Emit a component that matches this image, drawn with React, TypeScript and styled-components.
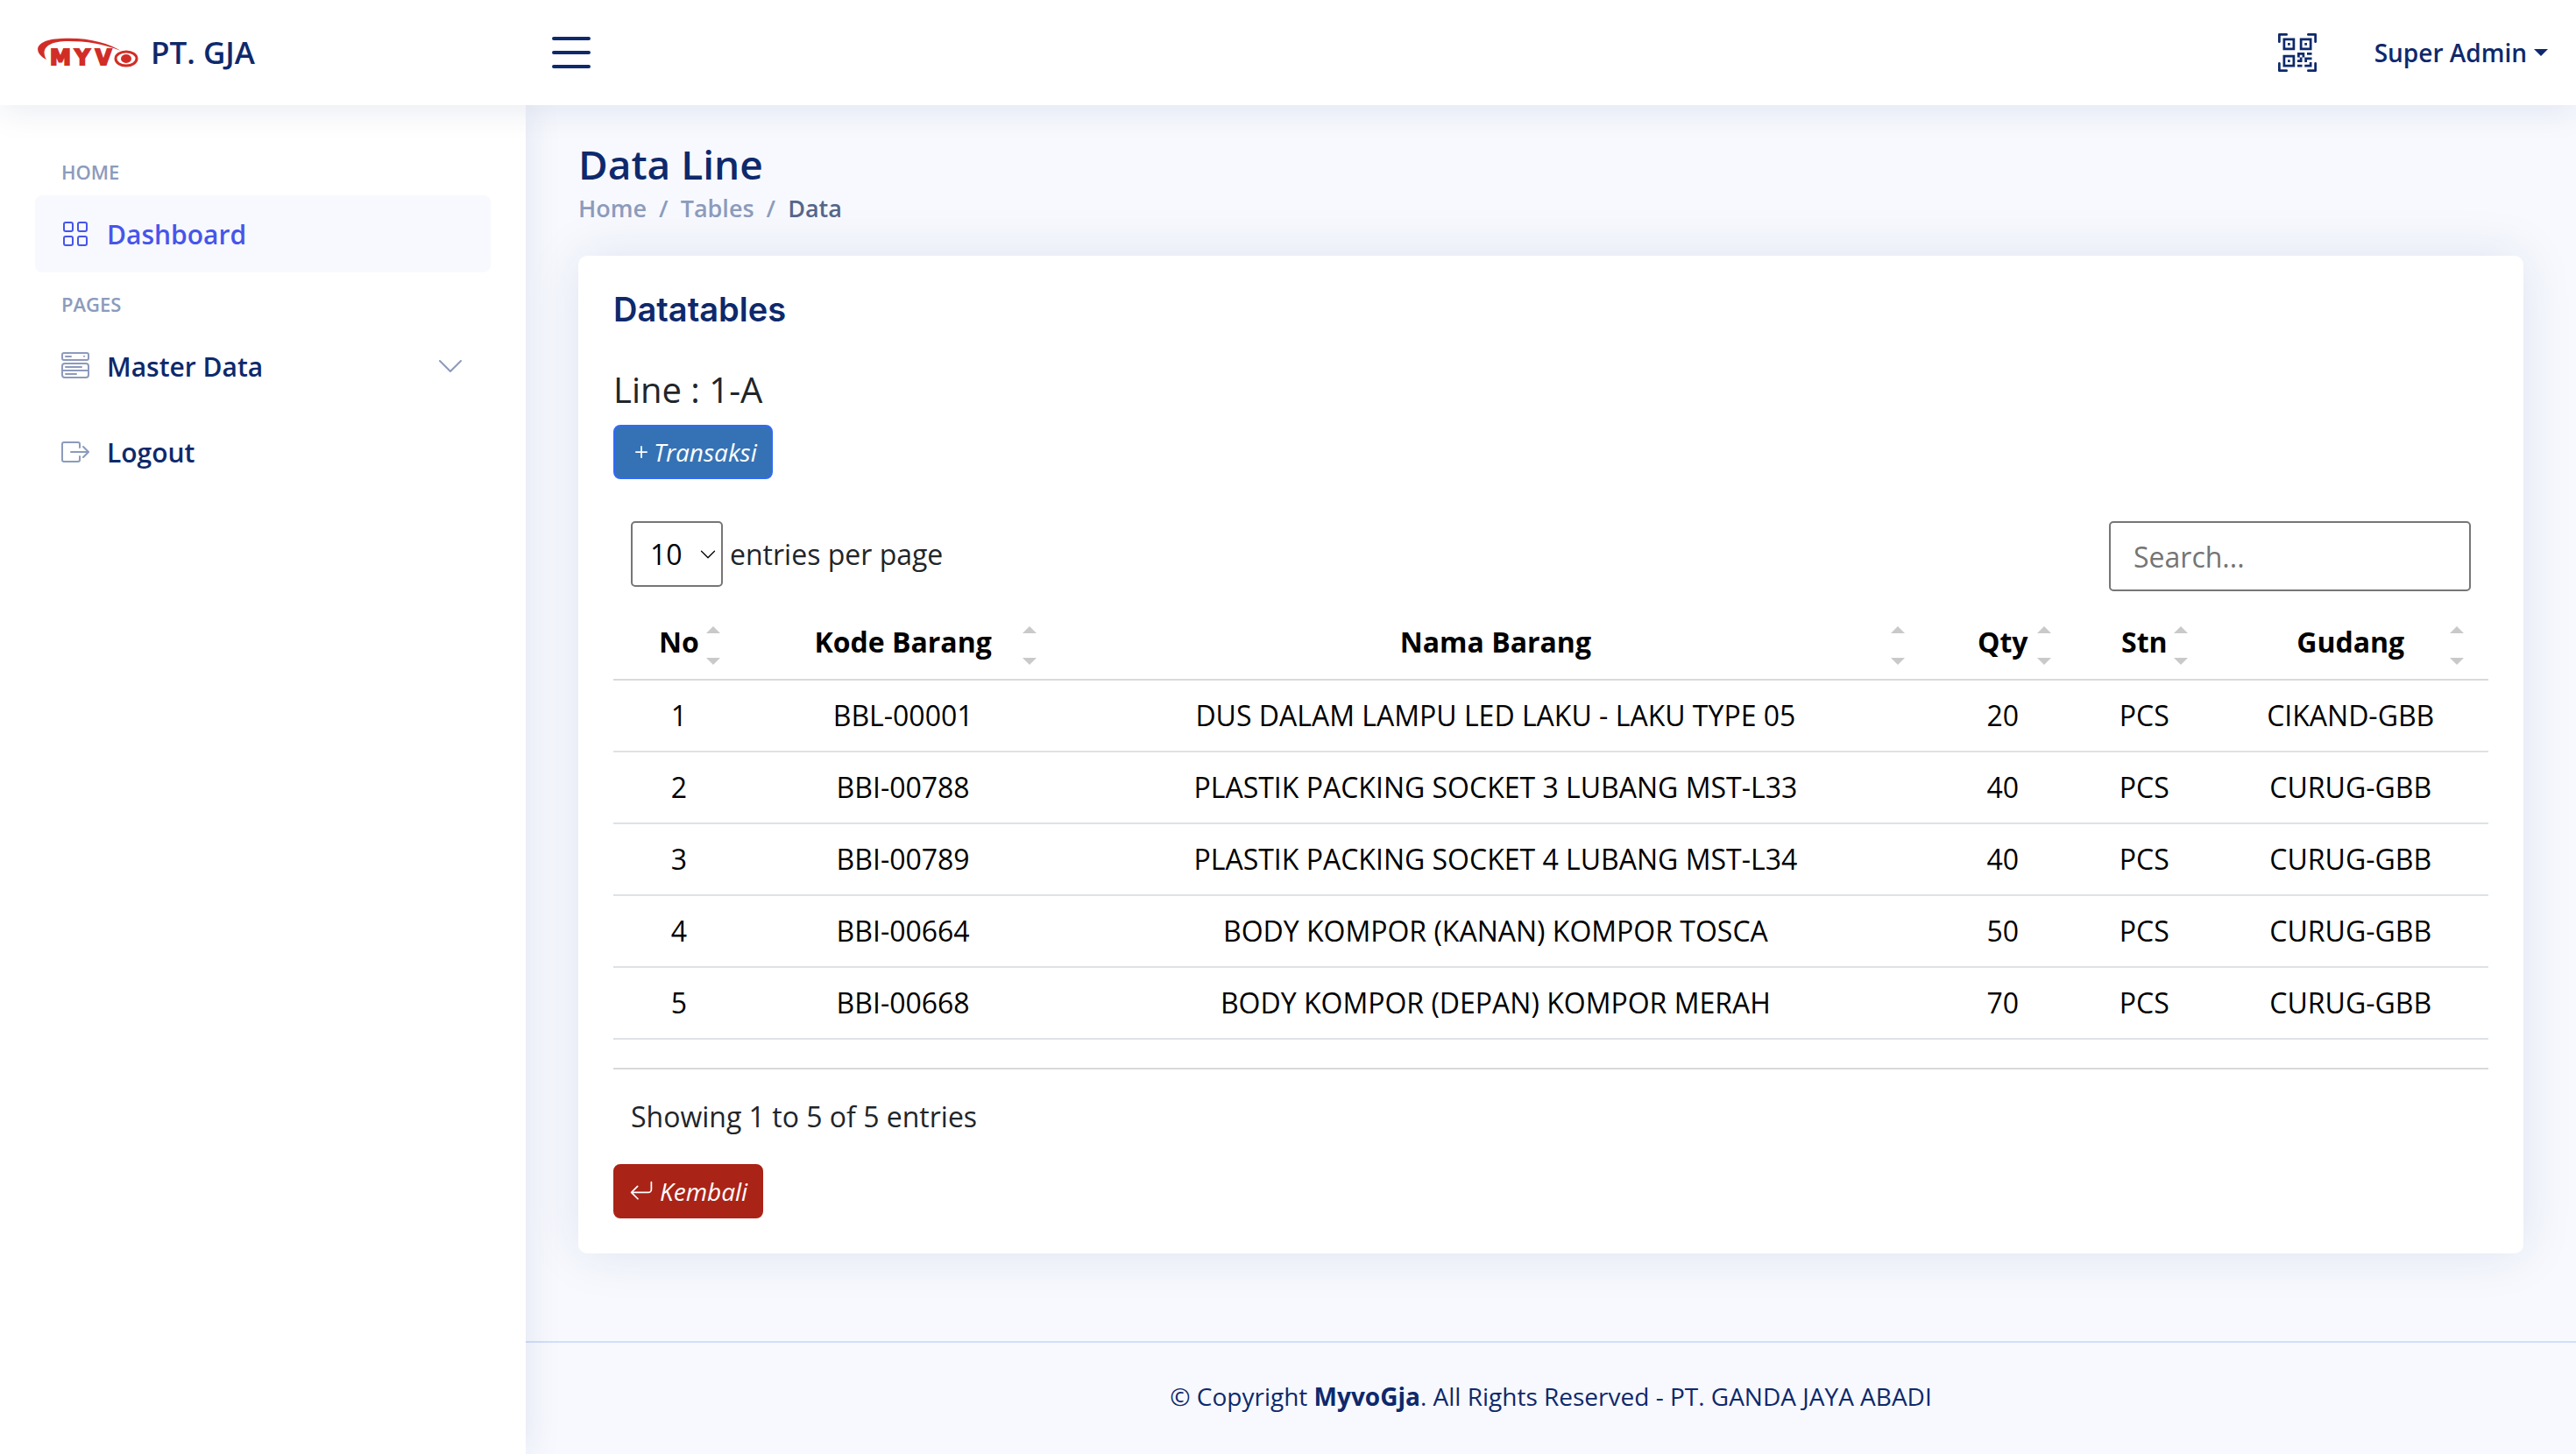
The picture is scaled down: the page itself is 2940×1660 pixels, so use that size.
import React from 'react';
import styled, { createGlobalStyle, css } from 'styled-components';
import {
  BsChevronDown,
  BsGrid,
  BsMenuButtonWide,
  BsBoxArrowRight,
  BsList,
  BsPlus,
  BsQrCodeScan,
  BsArrowReturnLeft,
} from 'react-icons/bs';

const body = '"Open Sans", sans-serif';
const heading = '"Open Sans", sans-serif';
const navy = '#0e296c';
const muted = '#8c9bbc';
const surface = '#f7f9fe';
const accent = '#4755ea';

const GlobalStyle = createGlobalStyle`
  *, *::before, *::after { box-sizing: border-box; }
  body {
    margin: 0;
    background: ${surface};
    color: #212529;
    font-family: ${body};
    font-size: 32px;
    line-height: 48px;
  }
  a { text-decoration: none; color: inherit; }
  svg { flex-shrink: 0; display: block; }
`;

const Page = styled.div`
  display: flex;
  flex-direction: column;
  min-height: 100vh;
`;

const Header = styled.header`
  position: sticky;
  top: 0;
  z-index: 3;
  display: flex;
  align-items: center;
  height: 120px;
  padding: 0 32px 0 40px;
  background: #fff;
  box-shadow: 0 4px 40px rgba(1, 41, 112, 0.1);
  color: ${navy};
`;

const Brand = styled.a`
  display: flex;
  align-items: center;
  gap: 12px;
  width: 580px;
  font: 600 35px/48px ${heading};
`;

const ToggleButton = styled.button`
  padding: 0;
  border: 0;
  background: none;
  color: inherit;
  cursor: pointer;
`;

const HeaderNav = styled.nav`
  display: flex;
  align-items: center;
  gap: 66px;
  margin-left: auto;
`;

const UserMenu = styled.button`
  display: flex;
  align-items: center;
  gap: 8px;
  padding: 0;
  border: 0;
  background: none;
  color: inherit;
  font: 600 28px/42px ${body};
  cursor: pointer;

  &::after {
    content: '';
    border: 8px solid transparent;
    border-top-color: currentColor;
    border-bottom: 0;
  }
`;

const Columns = styled.div`
  display: flex;
  flex: 1;
`;

const Sidebar = styled.aside`
  z-index: 2;
  flex: 0 0 600px;
  padding: 40px;
  background: #fff;
  box-shadow: 0 0 40px rgba(1, 41, 112, 0.1);
`;

const NavHeading = styled.h2`
  margin: 20px 0 10px 30px;
  color: ${muted};
  font: 600 22px/33px ${heading};
  text-transform: uppercase;
`;

const NavItem = styled.a<{ $active?: boolean }>`
  display: flex;
  align-items: center;
  gap: 20px;
  height: 88px;
  margin-bottom: 10px;
  padding: 0 30px;
  border-radius: 8px;
  color: ${navy};
  font: 600 30px/48px ${heading};

  span { padding-top: 2px; }
  svg { color: ${muted}; }
  svg:nth-of-type(2) { margin-left: auto; }

  ${(p) => p.$active && css`
    background: ${surface};
    color: ${accent};
    svg { color: ${accent}; }
  `}
`;

const Content = styled.div`
  flex: 1;
  min-width: 0;
`;

const Main = styled.main`
  padding: 40px 60px;
`;

const PageTitle = styled.h1`
  margin: 0;
  color: ${navy};
  font: 600 46px/54px ${heading};
`;

const Breadcrumb = styled.nav`
  display: flex;
  gap: 14px;
  padding: 3px 0;
  margin-bottom: 30px;
  color: ${muted};
  font: 600 27px/42px ${heading};

  [aria-current] { color: #556689; }
`;

const Card = styled.section`
  display: flex;
  flex-direction: column;
  align-items: flex-start;
  margin-bottom: 60px;
  padding: 40px;
  border-radius: 10px;
  background: #fff;
  box-shadow: 0 0 60px rgba(1, 41, 112, 0.1);
`;

const CardTitle = styled.h2`
  margin: 0 0 47px;
  color: ${navy};
  font: 600 38px/42px Inter, sans-serif;
`;

const LineTitle = styled.h3`
  margin: 0 0 16px;
  font: 400 40px/48px ${heading};
`;

const ActionLink = styled.a<{ $bg: string; $border: string; $gap: number }>`
  display: flex;
  align-items: center;
  gap: ${(p) => p.$gap}px;
  padding: 8px 16px;
  border: 2px solid ${(p) => p.$border};
  border-radius: 8px;
  background: ${(p) => p.$bg};
  color: #fff;
  font: italic 400 28px/42px ${body};
`;

const Toolbar = styled.div`
  display: flex;
  justify-content: space-between;
  align-items: flex-start;
  width: 100%;
  padding: 48px 20px 16px;
`;

const PerPage = styled.label`
  display: flex;
  align-items: center;
  gap: 8px;
`;

const SelectBox = styled.span`
  position: relative;
  color: #000;

  svg {
    position: absolute;
    right: 7px;
    top: 28px;
    pointer-events: none;
  }
`;

const Select = styled.select`
  display: block;
  appearance: none;
  width: 105px;
  height: 75px;
  padding: 0 20px;
  border: 2px solid #767676;
  border-radius: 5px;
  background: #fff;
  color: #000;
  font: inherit;
`;

const Search = styled.input`
  width: 413px;
  height: 80px;
  padding: 0 26px;
  border: 2px solid #767676;
  border-radius: 5px;
  background: #fff;
  font: inherit;

  &::placeholder { color: #757575; }
`;

const TableWrap = styled.div`
  width: 100%;
  padding-bottom: 32px;
  border-bottom: 2px solid #d9d9d9;
`;

const Table = styled.table`
  width: 100%;
  table-layout: fixed;
  border-collapse: separate;
  border-spacing: 0;
  color: #000;
  text-align: center;
`;

const Th = styled.th`
  padding: 18px 16px;
  border-bottom: 2px solid #d9d9d9;
`;

const SortButton = styled.button`
  position: relative;
  display: block;
  width: 100%;
  padding: 0;
  border: 0;
  background: none;
  color: inherit;
  font: 700 32px/48px ${body};
  cursor: pointer;

  &::before, &::after {
    content: '';
    position: absolute;
    right: 12px;
    border: 8px solid transparent;
  }
  &::before {
    top: 6px;
    border-bottom-color: #c9c9c9;
    border-top: 0;
  }
  &::after {
    bottom: -2px;
    border-top-color: #c9c9c9;
    border-bottom: 0;
  }
`;

const Td = styled.td`
  padding: 16px;
  border-bottom: 2px solid #dee2e6;
`;

const Info = styled.p`
  margin: 0;
  padding: 30px 20px;
`;

const Footer = styled.footer`
  padding: 40px 0;
  border-top: 2px solid #d0dffb;
  color: ${navy};
  font-size: 28px;
  line-height: 42px;
  text-align: center;
`;

const columns = [
  { label: 'No', width: '7%' },
  { label: 'Kode Barang', width: '16.9%' },
  { label: 'Nama Barang', width: '46.3%' },
  { label: 'Qty', width: '7.8%' },
  { label: 'Stn', width: '7.3%' },
  { label: 'Gudang', width: '14.7%' },
];

const rows = [
  ['1', 'BBL-00001', 'DUS DALAM LAMPU LED LAKU - LAKU TYPE 05', '20', 'PCS', 'CIKAND-GBB'],
  ['2', 'BBI-00788', 'PLASTIK PACKING SOCKET 3 LUBANG MST-L33', '40', 'PCS', 'CURUG-GBB'],
  ['3', 'BBI-00789', 'PLASTIK PACKING SOCKET 4 LUBANG MST-L34', '40', 'PCS', 'CURUG-GBB'],
  ['4', 'BBI-00664', 'BODY KOMPOR (KANAN) KOMPOR TOSCA', '50', 'PCS', 'CURUG-GBB'],
  ['5', 'BBI-00668', 'BODY KOMPOR (DEPAN) KOMPOR MERAH', '70', 'PCS', 'CURUG-GBB'],
];

function Logo() {
  return (
    <svg width="120" height="44" viewBox="0 0 120 44" role="img" aria-label="Myvo">
      <path
        d="M13 30C-3 22 -1 7 30 6C58 4 84 11 98 20C78 12 58 9 38 9C14 9 6 18 13 30Z"
        fill="#d12d26"
      />
      <g
        fill="#d12d26"
        stroke="#d12d26"
        strokeWidth="2"
        fontFamily="DejaVu Sans"
        fontWeight="700"
        fontSize="24"
        textAnchor="middle"
      >
        <text x="29" y="36">M</text>
        <text x="54" y="36">Y</text>
        <text x="78" y="36">V</text>
      </g>
      <ellipse cx="104" cy="29" rx="12" ry="8" fill="#fff" stroke="#d12d26" strokeWidth="3" />
      <ellipse cx="104" cy="29" rx="6" ry="5" fill="#d12d26" />
    </svg>
  );
}

export default function App() {
  return (
    <Page>
      <GlobalStyle />
      <Header>
        <Brand href="#">
          <Logo />
          <span>PT. GJA</span>
        </Brand>
        <ToggleButton aria-label="Toggle sidebar">
          <BsList size={64} />
        </ToggleButton>
        <HeaderNav>
          <a href="#" aria-label="Scan QR code">
            <BsQrCodeScan size={44} />
          </a>
          <UserMenu>Super Admin</UserMenu>
        </HeaderNav>
      </Header>
      <Columns>
        <Sidebar>
          <NavHeading>Home</NavHeading>
          <NavItem href="#" $active>
            <BsGrid size={32} />
            <span>Dashboard</span>
          </NavItem>
          <NavHeading>Pages</NavHeading>
          <NavItem href="#">
            <BsMenuButtonWide size={32} />
            <span>Master Data</span>
            <BsChevronDown size={32} />
          </NavItem>
          <NavItem href="#">
            <BsBoxArrowRight size={32} />
            <span>Logout</span>
          </NavItem>
        </Sidebar>
        <Content>
          <Main>
            <PageTitle>Data Line</PageTitle>
            <Breadcrumb aria-label="Breadcrumb">
              <a href="#">Home</a>
              <span>/</span>
              <a href="#">Tables</a>
              <span>/</span>
              <span aria-current="page">Data</span>
            </Breadcrumb>
            <Card>
              <CardTitle>Datatables</CardTitle>
              <LineTitle>Line : 1-A</LineTitle>
              <ActionLink href="#" $bg="#3572b5" $border="#3169f6" $gap={0}>
                <BsPlus size={28} />
                <span>Transaksi</span>
              </ActionLink>
              <Toolbar>
                <PerPage>
                  <SelectBox>
                    <Select defaultValue="10">
                      <option>5</option>
                      <option>10</option>
                      <option>15</option>
                    </Select>
                    <BsChevronDown size={20} />
                  </SelectBox>
                  <span>entries per page</span>
                </PerPage>
                <Search type="search" placeholder="Search..." aria-label="Search" />
              </Toolbar>
              <TableWrap>
                <Table>
                  <colgroup>
                    {columns.map((c) => (
                      <col key={c.label} style={{ width: c.width }} />
                    ))}
                  </colgroup>
                  <thead>
                    <tr>
                      {columns.map((c) => (
                        <Th key={c.label} scope="col">
                          <SortButton>{c.label}</SortButton>
                        </Th>
                      ))}
                    </tr>
                  </thead>
                  <tbody>
                    {rows.map((row) => (
                      <tr key={row[0]}>
                        {row.map((cell, i) => (
                          <Td key={i}>{cell}</Td>
                        ))}
                      </tr>
                    ))}
                  </tbody>
                </Table>
              </TableWrap>
              <Info>Showing 1 to 5 of 5 entries</Info>
              <ActionLink href="#" $bg="#aa2317" $border="#aa2317" $gap={7}>
                <BsArrowReturnLeft size={28} />
                <span>Kembali</span>
              </ActionLink>
            </Card>
          </Main>
          <Footer>
            © Copyright <strong>MyvoGja</strong>. All Rights Reserved - PT. GANDA JAYA ABADI
          </Footer>
        </Content>
      </Columns>
    </Page>
  );
}
